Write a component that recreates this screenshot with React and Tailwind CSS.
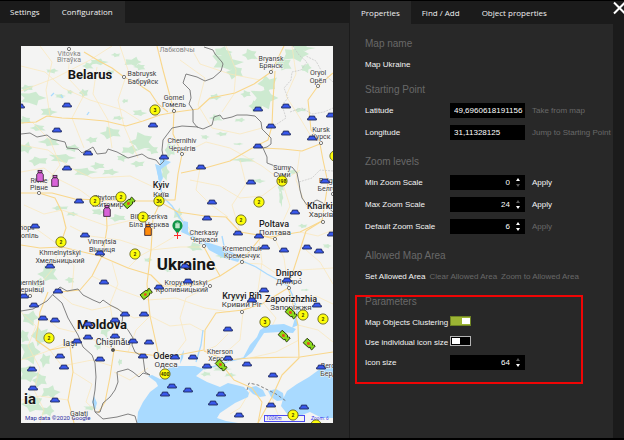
import React, { useState } from 'react';

// Everything on the map uses the same coordinate space as the viewBox below
const VIEW_BOX = '21 46 312 377';

const VEHICLES = [
  [67, 105], [57, 130], [153, 125], [20, 106], [258, 109], [286, 106], [271, 126], [286, 133], [312, 118], [312, 138],
  [331, 115], [258, 146], [201, 167], [164, 157], [88, 153], [67, 168], [79, 201], [35, 226], [85, 235], [100, 253],
  [50, 266], [104, 282], [159, 287], [58, 291], [251, 182], [212, 202], [207, 218], [238, 233], [259, 236], [295, 212],
  [325, 181], [265, 247], [284, 250], [307, 247], [319, 251], [332, 234], [185, 266], [188, 281], [287, 280], [264, 290],
  [24, 296], [34, 305], [43, 318], [55, 320], [88, 324], [115, 320], [125, 314], [144, 314], [88, 337], [115, 336],
  [133, 341], [149, 342], [77, 341], [60, 356], [64, 367], [32, 369], [100, 359], [143, 356], [33, 388], [55, 400],
  [175, 357], [172, 386], [165, 394], [252, 300], [317, 305], [228, 329], [193, 357], [228, 358], [207, 366], [247, 364],
  [273, 375], [321, 367], [188, 390], [221, 394], [213, 403], [271, 405], [239, 415], [304, 407],
];

const CLUSTERS = [
  [155, 110, '3'], [335, 156, ''], [282, 181, '198'], [259, 202, '2'], [241, 220, '2'], [159, 201, '36'], [121, 197, '2'],
  [95, 201, '2'], [143, 217, '2'], [61, 242, '2'], [135, 254, '2'], [49, 338, '2'], [165, 374, '400'], [265, 322, '3'],
  [303, 315, '2'], [323, 319, '2'], [293, 415, '2'], [316, 425, ''],
];

const BOTTLES = [
  [40, 176, '#d863d8'], [55, 181, '#d863d8'], [107, 211, '#d863d8'], [148, 230, '#ff8a0a'],
];

const TAGS = [
  [129, 203, -42], [146, 294, -38], [291, 313, 42], [284, 336, 42], [309, 344, 42], [221, 365, 45],
];

// text, x (centre), baseline, class
const CITY = 'text-[7px] fill-[#3c3c3c]';
const FADED = 'text-[7px] fill-[#808080]';
const MAJOR = 'text-[9px] font-medium fill-[#1c1c1c]';
const MAJOR_LOCAL = 'text-[8px] fill-[#3c3c3c]';
const COUNTRY = 'text-[13px] font-bold fill-[#161616]';
const LABELS = [
  ['Vitovka', 69, 56, FADED], ['Вітаўка', 69, 62, FADED], ['Лабковічы', 177, 52, FADED],
  ['Belarus', 90, 79, COUNTRY], ['Babruysk', 142, 76, CITY], ['Бабруйск', 143, 84, CITY],
  ['Gomel', 174, 100, CITY], ['Гомель', 174, 107, CITY],
  ['Bryansk', 271, 61, CITY], ['Брянск', 271, 68, CITY], ['Oryol', 318, 75, CITY], ['Орёл', 318, 83, CITY],
  ['Chernihiv', 182, 143, CITY], ['Чернігів', 182, 151, CITY], ['Kursk', 321, 132, CITY], ['Курск', 321, 139, CITY],
  ['Sumy', 282, 170, CITY], ['Суми', 282, 177, CITY], ['Belgorod', 333, 183, CITY], ['Белгород', 333, 191, CITY],
  ['Rivne', 39, 183, CITY], ['Рівне', 39, 190, CITY], ['Zhytomyr', 108, 200, CITY], ['Житомир', 108, 207, CITY],
  ['Kyiv', 161, 188, MAJOR], ['Київ', 161, 197, MAJOR_LOCAL],
  ['Bila Tserkva', 149, 219, CITY], ['Біла Церква', 149, 227, CITY],
  ['Kharkiv', 322, 209, MAJOR], ['Харків', 321, 217, MAJOR_LOCAL],
  ['Ternopil', 22, 230, CITY], ['Тернопіль', 22, 238, CITY],
  ['Vinnytsia', 102, 244, CITY], ['Вінниця', 102, 252, CITY],
  ['Khmelnytskyi', 60, 255, CITY], ['Хмельницький', 60, 263, CITY],
  ['Cherkasy', 204, 235, CITY], ['Черкаси', 204, 242, CITY], ['Poltava', 274, 227, MAJOR], ['Полтава', 275, 235, MAJOR_LOCAL],
  ['Kremenchuk', 242, 251, CITY], ['Кременчук', 242, 258, CITY],
  ['Chernivtsi', 29, 285, CITY], ['Чернівці', 30, 292, CITY],
  ['Kropyvnytskyi', 186, 285, CITY], ['Кропивницький', 182, 292, CITY],
  ['Dnipro', 289, 276, MAJOR], ['Дніпро́', 289, 284, MAJOR_LOCAL],
  ['Kryvyi Rih', 242, 299, MAJOR], ['Кривий Ріг', 242, 307, MAJOR_LOCAL],
  ['Zaporizhzhia', 291, 302, MAJOR], ['Запоріжжя', 291, 310, MAJOR_LOCAL],
  ['Moldova', 102, 329, COUNTRY], ['Iași', 70, 346, 'text-[9px] fill-[#2c2c2c]'], ['Chișinău', 113, 345, 'text-[9px] fill-[#2c2c2c]'],
  ['Odesa', 166, 359, MAJOR], ['Одеса', 166, 367, MAJOR_LOCAL],
  ['Kherson', 220, 354, CITY], ['Херсон', 220, 361, CITY], ['Berdyansk', 337, 368, CITY], ['Бердянськ', 338, 376, CITY],
  ['Galați', 79, 416, CITY], ['Ukraine', 186, 270, 'text-[17px] font-bold fill-[#161616]'],
  ['ia', 30, 404, 'text-[15px] font-bold fill-[#161616]'],
];

const TOWNS = [
  [124, 77], [174, 111], [271, 72], [318, 86], [182, 154], [321, 143], [39, 193], [204, 246], [275, 239], [242, 262],
  [289, 288], [242, 312], [210, 286], [323, 222], [102, 255], [30, 296], [69, 49], [333, 194],
];

// x, y, rx, ry
const WOODS = [
  [32, 98, 12, 6], [27, 88, 6, 3], [48, 112, 7, 4], [25, 120, 6, 3], [98, 62, 8, 3], [88, 66, 5, 3], [133, 62, 8, 4], [140, 67, 5, 3],
  [52, 71, 6, 2], [84, 93, 4, 4], [60, 96, 5, 2], [125, 101, 3, 2], [139, 113, 6, 3], [111, 133, 10, 5], [118, 118, 5, 2],
  [38, 128, 7, 3], [26, 148, 6, 5], [50, 142, 9, 4], [72, 148, 7, 3], [92, 140, 5, 3], [62, 158, 12, 4], [38, 161, 9, 4],
  [84, 172, 10, 4], [98, 166, 7, 3], [110, 172, 7, 3], [142, 142, 11, 8], [130, 150, 8, 4], [153, 150, 5, 4], [122, 158, 5, 3],
  [138, 164, 6, 3], [165, 172, 4, 7], [170, 150, 5, 7], [226, 62, 13, 8], [235, 72, 8, 6], [222, 52, 8, 5], [250, 55, 7, 5],
  [296, 54, 12, 7], [284, 64, 7, 6], [306, 68, 5, 4], [268, 84, 8, 8], [264, 98, 12, 9], [256, 106, 7, 5], [302, 48, 10, 3],
  [246, 94, 5, 3], [215, 97, 5, 3], [216, 118, 6, 3], [240, 120, 5, 2], [244, 160, 11, 2], [238, 144, 5, 1], [222, 134, 5, 2],
  [205, 137, 4, 2], [300, 110, 6, 2], [292, 172, 6, 2], [281, 187, 3, 5], [258, 181, 6, 2], [195, 247, 7, 4], [178, 214, 4, 5],
  [222, 256, 5, 2], [281, 198, 2, 7], [303, 226, 4, 2], [327, 246, 4, 2], [60, 208, 8, 2], [98, 212, 6, 3], [118, 218, 8, 3],
  [72, 214, 5, 2], [48, 274, 9, 7], [38, 283, 7, 4], [70, 280, 4, 3], [30, 318, 8, 6], [40, 336, 7, 9], [30, 352, 9, 10],
  [45, 360, 5, 6], [28, 374, 8, 8], [40, 380, 7, 6], [50, 392, 8, 6], [33, 404, 10, 8], [48, 411, 6, 5], [24, 336, 5, 6],
  [105, 330, 5, 6], [98, 346, 3, 4], [90, 408, 6, 2], [120, 362, 2, 3], [221, 369, 8, 2], [206, 374, 5, 2], [230, 375, 5, 2],
  [236, 297, 2, 4], [305, 290, 4, 1], [168, 270, 3, 2], [148, 260, 4, 2], [116, 55, 4, 2], [70, 92, 3, 2], [110, 72, 4, 2],
];

const MAIN_ROADS = [
  'M21 123 L36 122 L47 116 L62 118 L83 119 L105 121 L126 126 L143 121 L160 115 L176 112 L198 109 L210 98 L235 93 L254 84 L271 72 L281 52 L284 46',
  'M84 52 L99 61 L112 68 L124 77 L138 84 L150 92 L158 104 L168 112',
  'M157 46 L163 70 L174 111 L173 134 L182 154 L178 174 L175 200 L161 200',
  'M275 71 L273 100 L272 126 L268 140 L254 147 L230 161 L205 168 L181 173',
  'M262 148 L283 149 L302 151 L320 144 L323 160 L328 183 L322 221 L306 231 L300 250 L288 287',
  'M333 73 L318 86 L308 100 L311 130 L321 143',
  'M21 193 L52 193 L75 199 L100 200 L132 201 L158 201 L178 212 L205 216 L226 217 L240 232 L270 237 L300 232 L322 221',
  'M21 245 L40 248 L62 247 L100 256 L128 268 L151 275 L162 286 L200 285 L220 276 L240 263 L262 236 L275 239',
  'M160 203 L153 218 L151 250 L147 284 L150 316 L158 352 L162 357',
  'M39 193 L55 198 L62 212 L66 228 L60 246',
  'M106 202 L107 228 L103 254 L92 276 L80 290 L60 292',
  'M288 288 L292 300 L298 325 L299 358 L282 375 L272 397 L258 423',
  'M162 357 L178 355 L204 350 L205 330 L216 313 L243 310 L262 304 L288 288',
  'M204 351 L226 360 L250 358 L300 357 L333 352',
  'M48 292 L40 312 L36 340 L50 350 L70 346 L73 372 L68 400 L74 423',
  'M114 350 L128 352 L158 356', 'M114 350 L110 377 L105 402 L98 413',
  'M218 360 L234 380 L252 388 L262 402 L258 423', 'M204 247 L212 262 L220 276',
];

const SIDE_ROADS = [
  'M21 66 L45 72 L63 88 L90 100 L123 110 L142 122', 'M40 46 L52 62 L46 90 L50 116', 'M21 91 L55 78 L90 60 L112 46',
  'M97 67 L93 94 L108 120 L112 148', 'M70 50 L68 78 L84 95 L72 118 L84 148', 'M120 46 L128 70 L118 100 L124 126 L138 158',
  'M21 145 L48 150 L71 168 L92 178 L130 176 L160 190', 'M32 122 L50 140 L60 165 L39 193', 'M190 46 L200 64 L230 74 L260 80',
  'M180 60 L205 78 L198 105 L212 128 L240 134 L262 128', 'M226 46 L236 70 L234 94 L222 112', 'M292 46 L296 74 L286 96 L300 118 L312 138',
  'M182 154 L206 142 L230 148 L262 166 L282 181 L300 170', 'M190 180 L220 186 L240 198 L262 196 L282 181 L290 206 L275 239',
  'M200 168 L196 190 L210 204 L228 217', 'M240 160 L246 184 L232 205 L240 232', 'M300 151 L296 180 L306 206 L322 221',
  'M21 172 L44 168 L60 180 L80 190 L95 201', 'M24 205 L44 214 L62 210 L90 220 L107 226 L132 220 L150 222', 'M21 225 L35 228 L60 246 L52 270 L30 296',
  'M70 226 L90 236 L120 240 L151 250 L180 247 L204 247', 'M60 246 L74 266 L72 290', 'M112 262 L118 284 L110 304 L115 336 L114 350',
  'M92 276 L120 290 L148 300 L176 298 L205 308 L230 312', 'M128 268 L140 256 L160 245 L177 235', 'M178 212 L190 230 L204 247',
  'M242 263 L262 264 L280 276 L300 270 L333 268', 'M259 240 L262 262 L258 290 L243 312 L240 340 L222 356', 'M306 250 L320 262 L333 284',
  'M292 300 L316 296 L333 304', 'M298 325 L318 330 L333 342', 'M264 304 L276 318 L272 326', 'M150 316 L170 326 L190 324 L205 332',
  'M58 292 L72 304 L92 310 L112 306 L134 318 L150 316', 'M42 315 L58 328 L74 332 L88 326', 'M21 312 L36 326 L28 346 L40 368 L34 390 L44 410 L40 423',
  'M50 350 L62 366 L92 360 L112 366', 'M21 360 L45 352 L73 340 L88 337 L114 350', 'M73 372 L92 384 L86 402 L98 413', 'M114 372 L130 380 L148 368',
  'M128 352 L136 330 L150 316', 'M174 356 L186 340 L180 318 L186 298 L210 286', 'M228 334 L216 346 L204 351', 'M299 340 L276 352 L250 358',
  'M252 388 L240 408 L230 414', 'M272 397 L276 410 L282 423', 'M21 400 L40 396 L68 400', 'M300 232 L318 236 L333 230', 'M275 239 L284 258 L288 287',
];

const WATERS = [
  'M137 423 L138 412 L143 402 L150 392 L158 386 L156 382 L148 376 L152 375 L160 379 L167 376 L168 368 L176 366 L195 366 L204 369 L196 376 L207 382 L220 387 L228 383 L244 387 L249 393 L248 397 L235 403 L220 413 L217 418 L226 421 L238 423 Z',
  'M333 364 L320 369 L309 377 L297 384 L287 391 L283 399 L281 406 L288 415 L297 417 L310 412 L322 418 L333 418 Z',
  'M247 388 L256 386 L263 390 L266 396 L260 397 L253 394 Z', 'M268 391 L276 389 L283 393 L284 400 L277 401 L271 397 Z',
  'M260 330 L268 325 L284 324 L296 329 L293 333 L280 332 L264 333 L258 342 L252 352 L243 358 L250 345 L257 337 Z',
  'M203 241 L222 247 L241 257 L238 262 L224 258 L209 250 Z', 'M184 221 L188 222 L188 232 L201 241 L203 245 L190 236 L181 232 Z',
  'M155 164 L161 166 L162 178 L159 184 L158 176 Z', 'M171 162 L160 158 L160 168 L163 178 L160 184 L157 172 Z',
  'M94 396 L97 403 L95 410 L92 402 Z', 'M292 328 L296 315 L298 325 Z', 'M184 350 L183 358 L180 364 L181 355 Z',
];

const RIVERS = [
  'M160 182 L162 196 L172 206 L180 218 L186 226', 'M240 260 L256 267 L267 274 L278 280 L288 286 L292 294 L297 310 L296 326',
  'M251 352 L244 358 L230 361 L216 366 L204 369', 'M203 330 L201 345 L196 362', 'M222 236 L224 246',
  'M89 112 L87 115', 'M54 93 L51 96', 'M61 95 L63 98',
];

const BORDERS = [
  'M204 47 L213 50 L215 54 L222 62 L223 64 L221 71 L213 78 L205 81 L197 77 L186 74 L183 83 L190 90 L191 98 L189 104 L193 110 L193 122 L197 127 L203 129 L212 125 L214 117 L220 115 L223 119 L232 117 L237 115 L247 115 L255 116 L261 122 L262 129 L267 134 L271 138 L271 144 L267 147 L263 148 L267 157 L267 163 L275 166 L292 167 L297 173 L299 183 L300 190 L302 198 L307 205 L317 200 L323 203 L333 212',
  'M21 134 L30 133 L37 137 L47 135 L52 139 L65 142 L67 148 L78 149 L82 153 L88 150 L93 147 L97 154 L106 153 L108 149 L117 152 L128 158 L142 154 L148 158 L156 160 L160 165 L164 161 L162 150 L163 140 L172 128 L182 126 L198 127',
  'M21 311 L33 309 L47 301 L55 292 L60 287 L67 291 L78 289 L83 295 L93 300 L100 303 L103 300 L110 305 L118 309 L123 313 L122 323 L128 330 L133 338 L132 345 L135 352 L143 357 L145 372 L150 375 L143 373 L139 377 L133 372 L128 369 L117 372 L118 382 L115 390 L110 397 L103 403 L100 412 L95 412',
  'M53 295 L62 303 L68 318 L78 335 L83 347 L92 355 L95 363 L96 377 L95 390 L93 402 L95 412 L103 419 L117 417 L128 414 L135 416 L137 423',
];

const REGIONS = [
  'M293 46 L299 55 L307 62 L301 70 L292 72 L291 80 L284 88 L288 98 L282 105 L286 118 L271 128',
  'M333 82 L322 72 L316 61 L306 56', 'M290 112 L302 108 L312 114 L324 112 L333 108', 'M299 182 L312 178 L320 170 L333 171',
];

function Woods() {
  // uneven outline, so that every patch of forest has its own ragged edge
  const spokes = [1, 0.55, 1.1, 0.7, 0.95, 0.5, 1.15, 0.65, 0.9, 0.6];
  return (
    <g className="fill-[#cdead0]">
      {WOODS.map(([x, y, rx, ry], i) => (
        <polygon
          key={i}
          points={spokes
            .map((_, k) => {
              const r = spokes[(k + i * 3) % spokes.length] * 1.2;
              const a = (k / spokes.length) * Math.PI * 2;
              return `${(x + Math.cos(a) * rx * r).toFixed(1)},${(y + Math.sin(a) * ry * r).toFixed(1)}`;
            })
            .join(' ')}
        />
      ))}
    </g>
  );
}

const Vehicle = ({ x, y }) => (
  <path
    transform={`translate(${x} ${y})`}
    d="M-4.4 2 V0.6 L-3.1 0 L-2.6 -1.9 H2.6 L3.1 0 L4.4 0.6 V2 Z"
    fill="#3858ec"
    stroke="#202a5c"
    strokeWidth="0.9"
  />
);

const Cluster = ({ x, y, count }) => (
  <g transform={`translate(${x} ${y})`}>
    <circle r="5.1" fill="#fdfd0a" stroke="#66661a" strokeWidth="0.9" />
    <text y="2" textAnchor="middle" className="text-[5px] font-bold fill-[#3b3b00]">{count}</text>
  </g>
);

const Bottle = ({ x, y, color }) => (
  <g transform={`translate(${x} ${y})`} fill={color} stroke="#3a2a3a" strokeWidth="0.9">
    <rect x="-1.9" y="-5.6" width="3.8" height="2.4" />
    <path d="M-1.6 -3.2 H1.6 L3.3 -1.6 V5.4 H-3.3 V-1.6 Z" />
  </g>
);

const Tag = ({ x, y, angle }) => (
  <g transform={`translate(${x} ${y}) rotate(${angle})`}>
    <path d="M-5.2 -3 H2 L3.2 -1.6 H4 V-2.6 H6 V2.6 H4 V1.6 H3.2 L2 3 H-5.2 Z" fill="#8bdc1c" stroke="#26330c" strokeWidth="0.9" />
    <path d="M-2.6 0 L-0.8 -1.7 L1 0 L-0.8 1.7 Z" fill="#f0401c" />
  </g>
);

function MapView() {
  return (
    <svg viewBox={VIEW_BOX} className="block w-full bg-[#f4f4f3] font-[Roboto,'Noto_Sans',sans-serif]" role="img" aria-label="Map Ukraine">
      <Woods />
      <g fill="none" stroke="#fbe6b8" strokeWidth="0.7">
        {SIDE_ROADS.map(d => <path key={d} d={d} />)}
      </g>
      <g className="fill-[#a9daff]">
        {WATERS.map(d => <path key={d} d={d} />)}
      </g>
      <g fill="none" stroke="#a9daff" strokeWidth="1.3">
        {RIVERS.map(d => <path key={d} d={d} />)}
      </g>
      <g fill="none" stroke="#f9d78c" strokeWidth="1.1" strokeLinejoin="round">
        {MAIN_ROADS.map(d => <path key={d} d={d} />)}
      </g>
      <g fill="none" stroke="#c4c4c4" strokeWidth="0.7" strokeDasharray="2 1">
        {REGIONS.map(d => <path key={d} d={d} />)}
      </g>
      <g fill="none" stroke="#747474" strokeWidth="0.9" strokeLinejoin="round">
        {BORDERS.map(d => <path key={d} d={d} />)}
        <path d="M247 390 L249 383 L258 385 L268 390 L276 394 L286 401" strokeDasharray="3 2" />
      </g>
      <g fill="#ffffff" stroke="#555555" strokeWidth="0.8">
        {TOWNS.map(([x, y]) => <circle key={`${x}-${y}`} cx={x} cy={y} r="1.6" />)}
        <circle cx="113" cy="350" r="1.6" fill="#555555" />
      </g>
      <g textAnchor="middle" stroke="#f8f8f8" strokeWidth="1" paintOrder="stroke">
        {LABELS.map(([text, x, y, cls]) => <text key={text} x={x} y={y} className={cls}>{text}</text>)}
      </g>
      <g className="text-[6px] fill-[#2a2aa0]">
        <text x="25" y="420">Map data ©2020 Google</text>
        <rect x="264.5" y="415.5" width="40" height="6" fill="none" stroke="#4a4af0" strokeWidth="1" />
        <text x="266" y="420" className="text-[5px] italic fill-[#3a3af0]">100Km</text>
        <text x="311" y="420" className="text-[5px] italic fill-[#3a3af0]">Zoom: 6</text>
      </g>
      {VEHICLES.map(([x, y]) => <Vehicle key={`${x}-${y}`} x={x} y={y} />)}
      {TAGS.map(([x, y, angle]) => <Tag key={`${x}-${y}`} x={x} y={y} angle={angle} />)}
      {BOTTLES.map(([x, y, color]) => <Bottle key={`${x}-${y}`} x={x} y={y} color={color} />)}
      {CLUSTERS.map(([x, y, count]) => <Cluster key={`${x}-${y}`} x={x} y={y} count={count} />)}
      <path d="M177.5 235 C176.6 231 172.4 229.4 172.4 225.4 A5.1 5.1 0 0 1 182.6 225.4 C182.6 229.4 178.4 231 177.5 235 Z" fill="#0f9446" />
      <path d="M175.6 223.4 H179.4 V228 H175.6 Z M176.6 222.4 H178.4" fill="#bfe6cb" stroke="#bfe6cb" strokeWidth="0.6" />
      <path d="M174 235.5 H181 M177.5 232 V239" fill="none" stroke="#ff2a2a" strokeWidth="1" />
    </svg>
  );
}

const Tab = ({ active, className = '', children }) => (
  <button
    type="button"
    role="tab"
    aria-selected={Boolean(active)}
    className={`h-full text-[8px] font-medium text-[#f0f0f0] whitespace-nowrap font-['Open_Sans','Noto_Sans',sans-serif] ${active ? 'bg-[#282828]' : ''} ${className}`}
  >
    {children}
  </button>
);

const Section = ({ title, className = '', children }) => (
  <section className={className}>
    <h2 className="mb-[5px] text-[10px] leading-4 text-[#686868]">{title}</h2>
    {children}
  </section>
);

const Action = ({ disabled, children }) => (
  <button type="button" disabled={disabled} className="whitespace-nowrap text-[#f4f4f4] disabled:text-[#686868]">{children}</button>
);

const Row = ({ id, label, children }) => (
  <div className="flex h-[15px] items-center">
    <label htmlFor={id} className="w-[85px] shrink-0 whitespace-nowrap">{label}</label>
    {children}
  </div>
);

const TextField = ({ id, label, value, action }) => (
  <Row id={id} label={label}>
    <input id={id} defaultValue={value} className="mr-[7px] h-full w-[75px] bg-black pl-1 text-white outline-none" />
    <Action disabled>{action}</Action>
  </Row>
);

const NumberField = ({ id, label, value, min, max, action, actionDisabled }) => {
  const [current, setCurrent] = useState(value);
  return (
    <Row id={id} label={label}>
      <div className="mr-[7px] flex h-full w-[75px] items-center bg-black pr-[5px]">
        <input
          id={id}
          type="number"
          value={current}
          onChange={e => setCurrent(Number(e.target.value))}
          className="h-full w-full min-w-0 bg-transparent text-right text-white outline-none [appearance:textfield] [&::-webkit-inner-spin-button]:appearance-none"
        />
        <div className="ml-[6px] flex shrink-0 flex-col gap-[3px] text-white">
          <button type="button" aria-label={`Increase ${label}`} disabled={current >= max} onClick={() => setCurrent(current + 1)} className="disabled:text-[#5a5a5a]">
            <svg viewBox="0 0 4 3" className="block h-[3px] w-1 fill-current"><path d="M2 0 L4 3 H0 Z" /></svg>
          </button>
          <button type="button" aria-label={`Decrease ${label}`} disabled={current <= min} onClick={() => setCurrent(current - 1)} className="disabled:text-[#5a5a5a]">
            <svg viewBox="0 0 4 3" className="block h-[3px] w-1 fill-current"><path d="M0 0 H4 L2 3 Z" /></svg>
          </button>
        </div>
      </div>
      {action && <Action disabled={actionDisabled}>{action}</Action>}
    </Row>
  );
};

const Toggle = ({ id, label, defaultChecked }) => (
  <Row id={id} label={label}>
    <span className="relative mb-[3px] block h-[10px] w-[21px]">
      <input
        id={id}
        type="checkbox"
        role="switch"
        defaultChecked={defaultChecked}
        className="peer block h-full w-full appearance-none border border-[#b5b5b5] bg-black checked:border-[#6f8424] checked:bg-[#9cb434]"
      />
      <span className="pointer-events-none absolute left-[2px] top-[2px] h-[6px] w-2 bg-white peer-checked:left-3" />
    </span>
  </Row>
);

export default function App() {
  return (
    <div className="flex min-h-screen border-b-2 border-t border-black bg-[#282828] font-['Liberation_Sans',Arial,sans-serif] text-[8px] text-[#f4f4f4]">
      <main className="min-w-0 flex-1">
        <div className="flex h-[22px] bg-[#1b1b1b]" role="tablist">
          <Tab className="px-[10px]">Settings</Tab>
          <Tab active className="px-3">Configuration</Tab>
        </div>
        <div className="pb-3 pl-[21px] pr-4 pt-[23px]">
          <MapView />
        </div>
      </main>

      <aside className="w-[264px] shrink-0 border-l border-[#1b1b1b]">
        <div className="flex h-[23px] bg-[#1b1b1b]" role="tablist">
          <Tab active className="px-[11px]">Properties</Tab>
          <Tab className="px-[11px]">Find / Add</Tab>
          <Tab className="px-[11px]">Object properties</Tab>
        </div>
        <div className="pl-[15px] pt-3">
          <Section title="Map name" className="mb-[10px]">
            <p className="leading-[15px]">Map Ukraine</p>
          </Section>

          <Section title="Starting Point" className="mb-[14px]">
            <div className="flex flex-col gap-[7px]">
              <TextField id="latitude" label="Latitude" value="49,6960618191156" action="Take from map" />
              <TextField id="longitude" label="Longitude" value="31,11328125" action="Jump to Starting Point" />
            </div>
          </Section>

          <Section title="Zoom levels" className="mb-[14px]">
            <div className="flex flex-col gap-[7px]">
              <NumberField id="min-zoom" label="Min Zoom Scale" value={0} min={0} max={24} action="Apply" />
              <NumberField id="max-zoom" label="Max Zoom Scale" value={24} min={0} max={24} action="Apply" />
              <NumberField id="default-zoom" label="Default Zoom Scale" value={6} min={0} max={24} action="Apply" actionDisabled />
            </div>
          </Section>

          <Section title="Allowed Map Area" className="mb-[10px]">
            <div className="flex h-[15px] items-center gap-1">
              <Action>Set Allowed Area</Action>
              <Action disabled>Clear Allowed Area</Action>
              <Action disabled>Zoom to Allowed Area</Action>
            </div>
          </Section>

          <Section title="Parameters" className="relative">
            <div className="flex flex-col gap-[5px]">
              <Toggle id="clustering" label="Map Objects Clustering" defaultChecked />
              <Toggle id="individual-size" label="Use individual icon size" />
              <NumberField id="icon-size" label="Icon size" value={64} min={1} max={64} />
            </div>
            <div className="pointer-events-none absolute -bottom-[14px] -left-[10px] right-[30px] top-px border-2 border-[#f00505]" />
          </Section>
        </div>
      </aside>

      <div className="w-[11px] shrink-0 overflow-hidden bg-[#1b1b1b]">
        <button type="button" aria-label="Close" className="block">
          <svg viewBox="0 0 11 14" className="block h-[14px] w-[11px]"><path d="M1 1.5 L12 12.5 M12 1.5 L1 12.5" stroke="#ffffff" strokeWidth="2" /></svg>
        </button>
      </div>
    </div>
  );
}
